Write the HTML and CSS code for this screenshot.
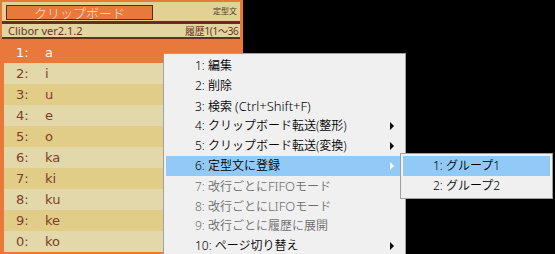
FILE: index.html
```html
<!DOCTYPE html>
<html lang="ja">
<head>
    <meta charset="UTF-8">
    <title>Clibor</title>
    <link rel="stylesheet" href="styles.css">
</head>
<body>

<div class="clibor">
    <div class="tab-bar">
        <div class="tab-btn">クリップボード</div>
        <span class="tab-label">定型文</span>
    </div>
    <div class="rule thick"></div>
    <div class="info-bar">
        <span class="version">Clibor ver2.1.2</span>
        <span class="history">履歴1(1～36</span>
    </div>
    <div class="rule"></div>
    <div class="rows">
        <div class="row current"><span class="num">1:</span><span>a</span></div>
        <div class="row"><span class="num">2:</span><span>i</span></div>
        <div class="row alt"><span class="num">3:</span><span>u</span></div>
        <div class="row"><span class="num">4:</span><span>e</span></div>
        <div class="row alt"><span class="num">5:</span><span>o</span></div>
        <div class="row"><span class="num">6:</span><span>ka</span></div>
        <div class="row alt"><span class="num">7:</span><span>ki</span></div>
        <div class="row"><span class="num">8:</span><span>ku</span></div>
        <div class="row alt"><span class="num">9:</span><span>ke</span></div>
        <div class="row"><span class="num">0:</span><span>ko</span></div>
    </div>
</div>

<!-- context menu -->
<div class="menu main-menu">
    <div class="item">1: 編集</div>
    <div class="item">2: 削除</div>
    <div class="item">3: 検索 <span class="latin">(Ctrl+Shift+F)</span></div>
    <div class="item sub">4: クリップボード転送(整形)</div>
    <div class="item sub">5: クリップボード転送(変換)</div>
    <div class="item sub active">6: 定型文に登録</div>
    <div class="item disabled">7: 改行ごとに<span class="latin">FIFO</span>モード</div>
    <div class="item disabled">8: 改行ごとに<span class="latin">LIFO</span>モード</div>
    <div class="item disabled">9: 改行ごとに履歴に展開</div>
    <div class="item sub">10: ページ切り替え</div>
</div>

<div class="menu sub-menu">
    <div class="item active">1: グループ1</div>
    <div class="item">2: グループ2</div>
</div>

</body>
</html>
```

FILE: styles.css
```css
body {
    margin: 0;
    width: 555px;
    height: 254px;
    background-color: #000;
    position: relative;
    overflow: hidden;
}
.clibor {
    width: 243px;
    height: 254px;
    box-sizing: border-box;
    padding: 2px 3px 0 2px;
    background-color: #e8793b;
    font-family: "DejaVu Sans", sans-serif;
}
.tab-bar {
    height: 19px;
    display: flex;
    align-items: center;
    padding: 0 3px 0 4px;
    background-color: #e2d192;
}
.tab-btn {
    width: 145px;
    height: 13px;
    border: 1px solid #5e2a1a;
    background-color: #e8793b;
    color: #f8e2d4;
    font-family: "Noto Sans CJK JP", sans-serif;
    font-weight: 300;
    font-size: 13px;
    line-height: 13px;
    text-align: center;
    margin-top: 2px;
}
.tab-label {
    margin-left: auto;
    font-family: "Noto Sans CJK JP", sans-serif;
    font-size: 8px;
    color: #4a3a30;
    margin-bottom: 3px;
}
.rule {
    height: 2px;
    background-color: #6b2c1d;
}
.rule.thick {
    height: 3px;
}
.info-bar {
    height: 13px;
    display: flex;
    align-items: center;
    padding-left: 6px;
    background-color: #e2d59f;
    color: #6b3424;
    font-size: 11px;
    font-family: "Noto Sans", sans-serif;
    white-space: nowrap;
}
.version {
    flex: 1;
}
.history {
    width: 55px;
    overflow: hidden;
    font-family: "Noto Sans", "Noto Sans CJK JP", sans-serif;
    font-size: 10px;
    letter-spacing: -0.3px;
}
.rows {
    margin: 3px 0 0 2px;
}
.row {
    height: 21px;
    display: flex;
    align-items: center;
    padding-left: 12px;
    background-color: #e3d8aa;
    color: #7b3f2b;
    font-size: 13px;
}
.row.alt {
    background-color: #e1cd88;
}
.row.current {
    background-color: #e8793b;
    color: #fff;
}
.num {
    width: 29px;
}
.menu {
    position: absolute;
    box-sizing: border-box;
    border: 1px solid #a0a0a0;
    padding: 2px;
    background-color: #f0f0f0;
    font-family: "Noto Sans", "Noto Sans CJK JP", sans-serif;
    font-weight: 350;
    font-size: 12px;
    color: #000;
}
.main-menu {
    left: 163px;
    top: 53px;
    width: 243px;
}
.sub-menu {
    left: 400px;
    top: 153px;
    width: 153px;
}
.item {
    height: 20px;
    line-height: 20px;
    padding-left: 29px;
    position: relative;
    white-space: nowrap;
}
.item .latin {
    font-size: 13px;
}
.sub-menu .item {
    padding-left: 30px;
}
.item.active {
    background-color: #91c9f7;
}
.item.disabled {
    color: #6d6d6d;
}
.item.sub::after {
    content: "";
    position: absolute;
    right: 9px;
    top: 6px;
    border-left: 4px solid #000;
    border-top: 4px solid transparent;
    border-bottom: 4px solid transparent;
}
.item.sub.active::after {
    border-left-color: #fff;
}
```
